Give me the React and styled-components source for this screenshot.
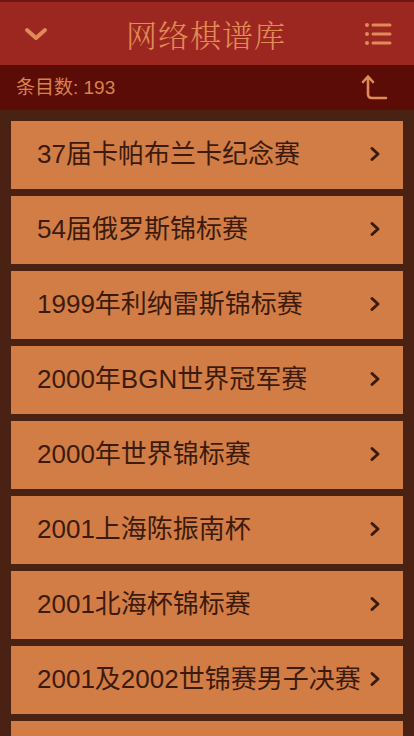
import styled, { createGlobalStyle } from 'styled-components'

const GlobalStyle = createGlobalStyle`
  html, body {
    margin: 0;
    padding: 0;
    background-color: #4a2214;
  }
  body {
    font-family: "Liberation Sans", "Noto Sans CJK SC", sans-serif;
  }
`

const Page = styled.div`
  width: 414px;
  height: 736px;
  overflow: hidden;
  display: flex;
  flex-direction: column;
  background-color: #4a2214;
`

const NavBar = styled.header`
  height: 65px;
  flex: 0 0 auto;
  display: flex;
  align-items: center;
  justify-content: space-between;
  padding: 0 22px 0 24px;
  box-sizing: border-box;
  background-color: #9c2720;
  border-top: 2px solid #6e1510;
`

const NavTitle = styled.h1`
  margin: 0;
  font-family: "Noto Serif CJK SC", "Noto Sans CJK SC", serif;
  font-weight: 300;
  font-size: 31px;
  line-height: 1;
  letter-spacing: 1px;
  color: #e08b57;
`

const IconButton = styled.button`
  border: 0;
  padding: 0;
  background: none;
  display: flex;
  align-items: center;
  justify-content: center;
  width: ${props => props.$width}px;
  height: 30px;
`

const SubBar = styled.div`
  height: 45px;
  flex: 0 0 auto;
  display: flex;
  align-items: center;
  justify-content: space-between;
  padding: 0 26px 0 16px;
  background-color: #5b0c06;
`

const Count = styled.span`
  font-size: 19px;
  line-height: 1;
  color: #d9824f;
`

const List = styled.ul`
  list-style: none;
  margin: 0;
  padding: 11px 11px 0 11px;
  display: flex;
  flex-direction: column;
  gap: 7px;
`

const ListItem = styled.li`
  height: 68px;
  flex: 0 0 auto;
  box-sizing: border-box;
  display: flex;
  align-items: center;
  justify-content: space-between;
  padding: 0 22px 3px 26px;
  background-color: #d27d45;

  &:active {
    background-color: #c26f3b;
  }
`

const ItemName = styled.span`
  font-size: 26px;
  line-height: 1;
  color: #3c1b0e;
  white-space: nowrap;
`

const Chevron = styled.svg`
  flex: 0 0 auto;
`

const games = [
  '37届卡帕布兰卡纪念赛',
  '54届俄罗斯锦标赛',
  '1999年利纳雷斯锦标赛',
  '2000年BGN世界冠军赛',
  '2000年世界锦标赛',
  '2001上海陈振南杯',
  '2001北海杯锦标赛',
  '2001及2002世锦赛男子决赛',
]

const App = () => {
  return (
    <Page>
      <GlobalStyle />
      <NavBar>
        <IconButton $width={24}>
          <svg width="24" height="14" viewBox="0 0 24 14">
            <path d="M3 3 L12 11 L21 3" fill="none" stroke="#e08b57" strokeWidth="4" strokeLinecap="round" strokeLinejoin="round" />
          </svg>
        </IconButton>
        <NavTitle>网络棋谱库</NavTitle>
        <IconButton $width={28}>
          <svg width="28" height="24" viewBox="0 0 28 24">
            <g fill="#e08b57">
              <circle cx="3" cy="3" r="2" />
              <circle cx="3" cy="12" r="2" />
              <circle cx="3" cy="21" r="2" />
            </g>
            <g stroke="#e08b57" strokeWidth="3" strokeLinecap="round">
              <line x1="9" y1="3" x2="26" y2="3" />
              <line x1="9" y1="12" x2="26" y2="12" />
              <line x1="9" y1="21" x2="26" y2="21" />
            </g>
          </svg>
        </IconButton>
      </NavBar>
      <SubBar>
        <Count>条目数: 193</Count>
        <svg width="28" height="28" viewBox="0 0 28 28">
          <path d="M3 8 L8 2.5 L13 8 M8 2.5 L8 20 Q8 24 12 24 L26 24" fill="none" stroke="#e08b57" strokeWidth="2.6" strokeLinecap="round" strokeLinejoin="round" />
        </svg>
      </SubBar>
      <List>
        {games.map(name => (
          <ListItem key={name}>
            <ItemName>{name}</ItemName>
            <Chevron width="12" height="16" viewBox="0 0 12 16">
              <path d="M3 2.5 L9 8 L3 13.5" fill="none" stroke="#3c1b0e" strokeWidth="3" strokeLinecap="round" strokeLinejoin="round" />
            </Chevron>
          </ListItem>
        ))}
        <ListItem />
      </List>
    </Page>
  )
}

export default App
